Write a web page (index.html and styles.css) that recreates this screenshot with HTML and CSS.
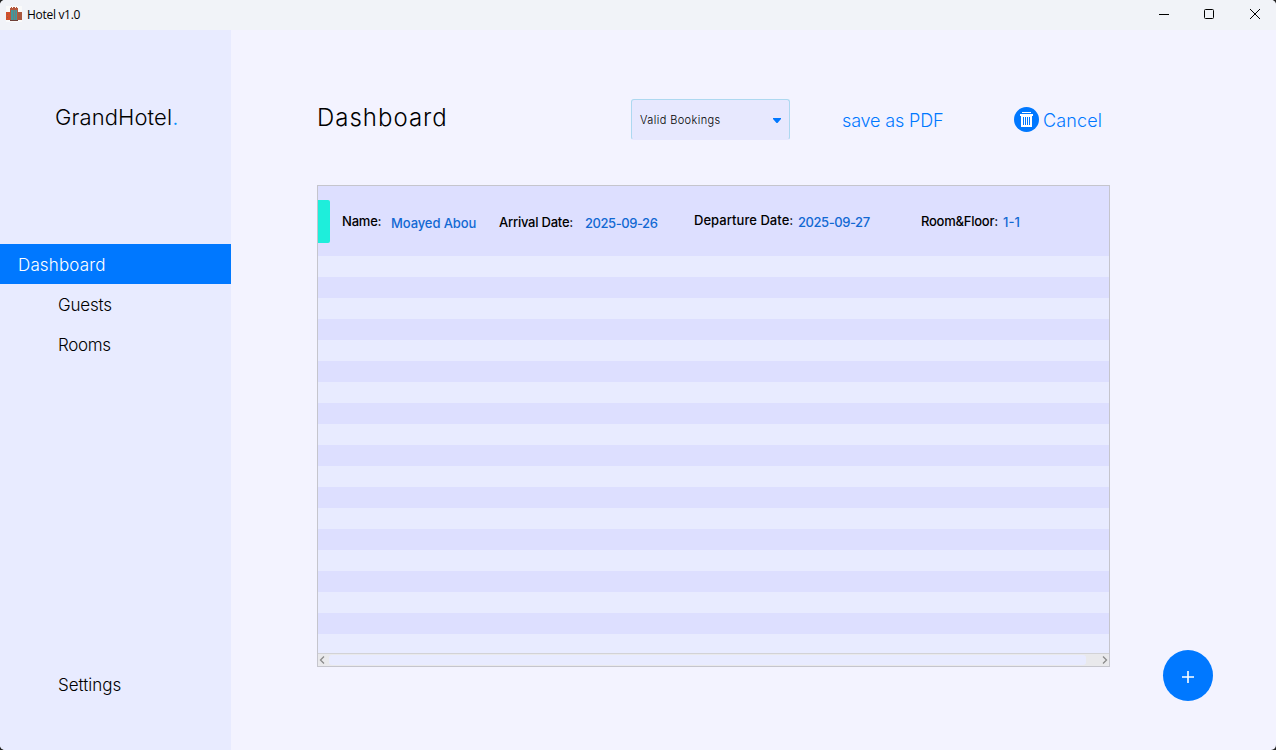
FILE: index.html
```html
<!DOCTYPE html>
<html lang="en">
<head>
<meta charset="utf-8">
<title>Hotel v1.0</title>
<link rel="stylesheet" href="styles.css">
</head>
<body>
<div class="window">
  <header class="titlebar">
    <svg class="app-icon" width="16" height="16" viewBox="0 0 16 16" shape-rendering="crispEdges">
      <rect width="16" height="16" fill="#fafafa"/>
      <rect x="0" y="6" width="4" height="8" fill="#d2502c"/>
      <rect x="12" y="6" width="4" height="8" fill="#a8583f"/>
      <path d="M4 2h1V1h1v1h1V1h2v1h1V1h1v1h1v13H4z" fill="#b5573d"/>
      <path d="M5 4h2v10H5zM8 4h1v10H8zM10 4h1v10h-1z" fill="#3f999e"/>
      <path d="M7 4h1v10H7zM9 4h1v10H9z" fill="#6d7f7c"/>
      <path d="M1 8h1v1H1zM1 11h1v1H1zM13 8h1v1h-1zM13 11h1v1h-1z" fill="#8f5f4c"/>
      <rect x="4" y="14" width="8" height="1" fill="#6e4038"/>
    </svg>
    <span class="app-title">Hotel v1.0</span>
    <div class="controls">
      <svg width="46" height="30" viewBox="0 0 46 30"><path d="M18 14.500h10" stroke="#000"/></svg>
      <svg width="46" height="30" viewBox="0 0 46 30"><rect x="17.500" y="9.500" width="9" height="9" rx="1" fill="none" stroke="#000"/></svg>
      <svg width="46" height="30" viewBox="0 0 46 30"><path d="M17 9l10 10M27 9l-10 10" stroke="#000"/></svg>
    </div>
  </header>
  <div class="body">
    <aside class="sidebar">
      <div class="brand">GrandHotel<span class="dot">.</span></div>
      <nav class="nav">
        <a class="nav-item active">Dashboard</a>
        <a class="nav-item guests">Guests</a>
        <a class="nav-item rooms">Rooms</a>
      </nav>
      <a class="nav-item settings">Settings</a>
    </aside>
    <main class="main">
      <div class="toolbar">
        <h1 class="title">Dashboard</h1>
        <div class="select"><span class="select-text">Valid Bookings</span>
          <svg width="8" height="5" viewBox="0 0 8 5"><path d="M0 0h8v1L4.500 5h-1L0 1z" fill="#0078ff"/></svg>
        </div>
        <a class="link save">save as PDF</a>
        <svg class="trash" width="25" height="25" viewBox="0 0 25 25">
          <circle cx="12.500" cy="12.500" r="12.500" fill="#0078ff"/>
          <path d="M8 5h9v1H8zM6 7h13v2H6z" fill="#fff"/>
          <path d="M7 9h11v11H7z" fill="#fff"/>
          <path d="M9.500 10v8M11.500 10v8M13.500 10v8M15.500 10v8" stroke="#0078ff"/>
        </svg>
        <a class="link cancel">Cancel</a>
      </div>
      <section class="list">
        <div class="booking">
          <span class="marker"></span>
          <span class="field name">Name:</span>
          <span class="value name-value">Moayed Abou</span>
          <span class="field arrival">Arrival Date:</span>
          <span class="value date arrival-value">2025-09-26</span>
          <span class="field departure">Departure Date:</span>
          <span class="value date departure-value">2025-09-27</span>
          <span class="field room">Room&amp;Floor:</span>
          <span class="value room-value">1-1</span>
        </div>
        <div class="stripes"></div>
        <div class="scrollbar">
          <svg width="11" height="12" viewBox="0 0 11 12"><path d="M6 2.500L2.500 6 6 9.500" fill="none" stroke="#8b8b8b" stroke-width="1.300"/></svg>
          <span class="thumb"></span>
          <svg width="23" height="12" viewBox="0 0 23 12"><path d="M17 2.500L20.500 6 17 9.500" fill="none" stroke="#8b8b8b" stroke-width="1.300"/></svg>
        </div>
      </section>
      <button class="add"><svg width="12" height="12" viewBox="0 0 12 12"><path d="M6 0v12M0 6h12" stroke="#fff" stroke-width="1.600"/></svg></button>
    </main>
  </div>
</div>
</body>
</html>
```
FILE: styles.css
```css
* { box-sizing: border-box; }
body { margin: 0; background: #222; font-family: Inter, "Liberation Sans", sans-serif; color: #000; }
.window { width: 1276px; height: 750px; display: flex; flex-direction: column; background: #f3f3ff; border-radius: 5px; overflow: hidden; }
.titlebar { height: 30px; flex: none; display: flex; align-items: center; padding-left: 6px; background: #f1f3f8; }
.app-icon { margin-top: -2px; }
.app-title { margin: 0 auto 0 5px; font: 12px/30px "Open Sans", "Noto Sans", sans-serif; letter-spacing: -0.3px; }
.controls { display: flex; margin-right: -3px; }
.controls svg { display: block; }
.body { flex: 1; display: flex; min-height: 0; }
.sidebar { width: 231px; flex: none; display: flex; flex-direction: column; background: #e8ebff; }
.brand { margin: 67px 0 0 55px; height: 40px; line-height: 41px; font-size: 22px; font-weight: 300; letter-spacing: 0.1px; white-space: nowrap; }
.dot { color: #0091ff; }
.nav { margin-top: 107px; display: flex; flex-direction: column; }
.nav-item { height: 40px; line-height: 42px; padding-left: 58px; font-size: 17px; font-weight: 300; }
.active { padding-left: 18px; background: #0078ff; color: #fff; letter-spacing: 0.15px; }
.guests { letter-spacing: -0.2px; }
.rooms { letter-spacing: -0.35px; }
.settings { margin: auto 0 46px; }
.main { flex: 1; padding: 69px 0 0 86px; display: flex; flex-direction: column; min-width: 0; }
.toolbar { display: flex; height: 42px; white-space: nowrap; }
.title { margin: 0; width: 314px; font-size: 24px; line-height: 38px; font-weight: 300; letter-spacing: 1px; }
.select { width: 159px; height: 41px; display: flex; align-items: center; justify-content: space-between; padding: 0 8px 0 8px; background: #e7e8fe; border: 1px solid #add8f0; border-bottom-color: #e7e8fe; border-radius: 3px; font-size: 11px; font-weight: 300; letter-spacing: 0.4px; }
.select svg { margin-top: 1px; }
.link { color: #0078ff; font-size: 18px; line-height: 43px; font-weight: 300; }
.save { margin-left: 52px; width: 172px; letter-spacing: -0.15px; }
.trash { margin-top: 8px; }
.cancel { margin-left: 4px; letter-spacing: 0.15px; }
.list { width: 793px; height: 482px; margin-top: 44px; border: 1px solid #c5c5cd; display: flex; flex-direction: column; }
.booking { height: 70px; flex: none; display: flex; background: #dddfff; font-size: 13px; line-height: 22px; white-space: nowrap; }
.marker { width: 12px; height: 43px; margin: 14px 12px 0 0; background: #1eeedb; border-radius: 0 2px 2px 0; }
.field { font-weight: 500; }
.value { font-weight: 500; color: #1269d3; }
.date { letter-spacing: -0.45px; }
.name { width: 49px; margin-top: 24px; letter-spacing: -0.2px; }
.name-value { width: 108px; margin-top: 26px; letter-spacing: -0.1px; }
.arrival { width: 86px; margin-top: 25px; letter-spacing: -0.23px; }
.arrival-value { width: 109px; margin-top: 26px; }
.departure { width: 104px; margin-top: 23px; letter-spacing: 0.05px; }
.departure-value { width: 123px; margin-top: 25px; }
.room { width: 82px; margin-top: 24px; letter-spacing: -0.25px; }
.room-value { margin-top: 25px; }
.stripes { flex: 1; background: repeating-linear-gradient(#e8ebff 0 21px, #dddfff 21px 42px); }
.scrollbar { height: 13px; flex: none; display: flex; background: #e9e9ec; border-top: 1px solid #d2d2d6; }
.thumb { flex: 1; margin: 1px 0; background: #e8ebff; border-radius: 3px; }
.add { align-self: flex-end; flex: none; margin: -17px 63px 0 0; width: 50px; height: 51px; padding: 3px 0 0; border: 0; border-radius: 50%; background: #0078ff; display: flex; align-items: center; justify-content: center; }
```
